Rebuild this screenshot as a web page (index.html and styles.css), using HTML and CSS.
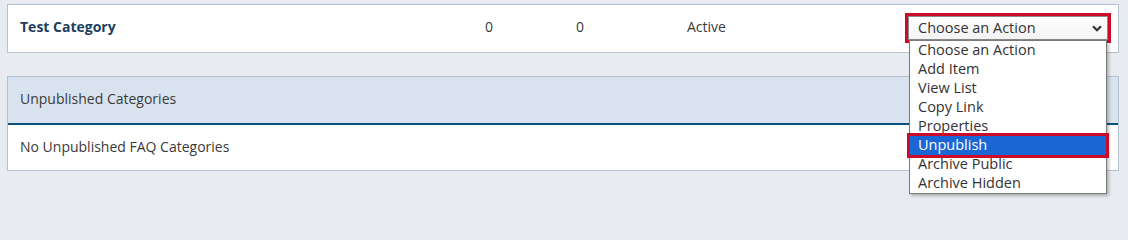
FILE: index.html
```html
<!DOCTYPE html>
<html>
<head>
<meta charset="utf-8">
<link rel="stylesheet" href="styles.css">
</head>
<body>
<div class="page">
  <div class="card card-top">
    <div class="row">
      <div class="col-title">Test Category</div>
      <div class="col-num">0</div>
      <div class="col-num2">0</div>
      <div class="col-status">Active</div>
      <div class="col-action">
        <div class="select-wrap">
          <div class="select">
            <span>Choose an Action</span>
            <svg class="chev" width="10" height="7" viewBox="0 0 10 7"><path d="M1 1.2 L5 5.2 L9 1.2" fill="none" stroke="#333" stroke-width="2.2"/></svg>
          </div>
          <ul class="menu">
            <li>Choose an Action</li>
            <li>Add Item</li>
            <li>View List</li>
            <li>Copy Link</li>
            <li>Properties</li>
            <li class="sel">Unpublish</li>
            <li>Archive Public</li>
            <li>Archive Hidden</li>
          </ul>
        </div>
      </div>
    </div>
  </div>
  <div class="card card-unpub">
    <div class="card-head">Unpublished Categories</div>
    <div class="card-body">No Unpublished FAQ Categories</div>
  </div>
</div>
</body>
</html>
```

FILE: styles.css
```css
* { box-sizing: border-box; }
html, body { margin: 0; padding: 0; }
body {
  background: #e8ecf1;
  font-family: "Open Sans", "Liberation Sans", sans-serif;
  font-size: 14px;
  color: #3a3a3a;
  width: 1128px;
  height: 205px;
  overflow: hidden;
}
.page {
  padding: 4px 9px 0 7px;
}
.card {
  background: #fff;
  border: 1px solid #b3c1d3;
}
.row {
  height: 47px;
  display: grid;
  grid-template-columns: 465px 91px 111px 1fr 206px;
  align-items: center;
  padding: 0 7px 1px 12px;
}
.col-title, .col-num, .col-num2, .col-status {
  padding-bottom: 3px;
}
.col-title {
  font-weight: 700;
  color: #1c3f5e;
}
.col-action {
  position: relative;
  height: 30px;
}
.select-wrap {
  position: relative;
  width: 206px;
  height: 30px;
  border: 3px solid #cc0a2a;
}
.select {
  height: 24px;
  border: 1px solid #8a8a8a;
  background: linear-gradient(#ffffff, #f3f3f3);
  display: flex;
  align-items: center;
  justify-content: space-between;
  padding: 0 5px 2px 9px;
  color: #333;
  font-size: 14.5px;
}
.chev { display: block; margin-top: 2px; }
.menu {
  position: absolute;
  left: 1px;
  top: 24px;
  width: 198px;
  margin: 0;
  padding: 0;
  list-style: none;
  background: #fff;
  border: 1px solid #7a7a7a;
  box-shadow: 2px 2px 3px rgba(0, 0, 0, 0.25);
  z-index: 5;
}
.menu li {
  height: 19px;
  line-height: 17px;
  padding: 0 0 2px 8px;
  color: #333;
  font-size: 14.5px;
}
.menu li.sel {
  background: #1a66d4;
  color: #fff;
  outline: 3px solid #cc0a2a;
  position: relative;
  z-index: 1;
}
.card-unpub {
  margin-top: 23px;
}
.card-head {
  height: 48px;
  background: #d9e3ef;
  border-bottom: 2px solid #0d4f80;
  display: flex;
  align-items: center;
  padding: 0 12px 3px;
  color: #3a3a3a;
}
.card-body {
  height: 45px;
  display: flex;
  align-items: center;
  padding: 0 12px 2px;
}
```
